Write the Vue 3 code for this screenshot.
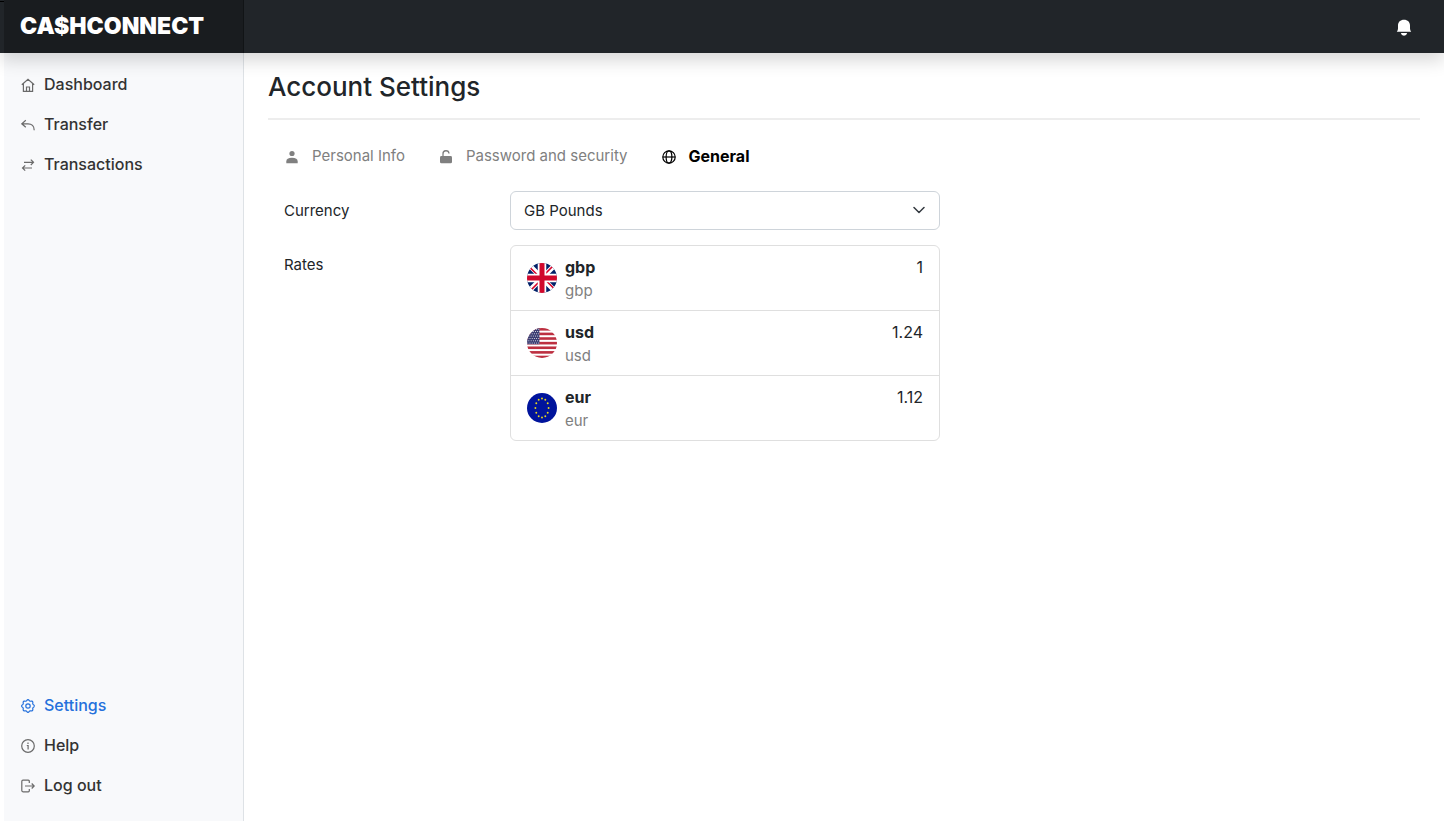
<script setup>
import { ref } from 'vue'

const mainLinks = [
  { label: 'Dashboard', icon: 'home' },
  { label: 'Transfer', icon: 'reply' },
  { label: 'Transactions', icon: 'swap' },
]
const footLinks = [
  { label: 'Settings', icon: 'gear', active: true },
  { label: 'Help', icon: 'info' },
  { label: 'Log out', icon: 'exit' },
]
const tabs = [
  { label: 'Personal Info', icon: 'person' },
  { label: 'Password and security', icon: 'lock' },
  { label: 'General', icon: 'globe', active: true },
]
const strokes = {
  home: 'M.8 6.700 7 1.200l6.200 5.500M2.400 5.600V13.300H11.600V5.600M5.500 13V9H8.500V13',
  reply: 'M4.800 2.300.8 5.800 4.800 9.300M1 5.800H7C10.800 5.800 13.200 8 13.200 12.300',
  swap: 'M3 4.300H12.500M9.800 1.600 12.500 4.300 9.800 7M11 10H1.500M4.200 7.300 1.500 10 4.200 12.700',
  info: 'M7 .7A6.300 6.300 0 1 1 7 13.300A6.300 6.300 0 1 1 7 .7M5.800 6.500H7.100V10.500M7 3.500V4.900',
  exit: 'M8.300 4V2.200Q8.300 1.200 7.300 1.200H2Q.8 1.200 .8 2.400V11.600Q.8 12.800 2 12.800H7.300Q8.300 12.800 8.300 11.800V10M4 7H13.200M10.700 4.500 13.200 7 10.700 9.500',
}
const gear = Array.from({ length: 65 }, (_, i) => {
  const a = (i / 64) * Math.PI * 2
  const r = 5.8 + 0.6 * Math.cos(a * 8)
  return `${(7 + r * Math.cos(a)).toFixed(2)},${(7 + r * Math.sin(a)).toFixed(2)}`
}).join(' ')

const currency = ref('gbp')
const rates = [
  { code: 'gbp', value: '1' },
  { code: 'usd', value: '1.24' },
  { code: 'eur', value: '1.12' },
]
const stars = Array.from({ length: 12 }, (_, i) => {
  const a = (i / 12) * Math.PI * 2
  return { x: 15 + 6.6 * Math.sin(a), y: 15 - 9.5 * Math.cos(a) }
})
const canton = Array.from({ length: 42 }, (_, i) => ({
  x: 0.8 + (i % 6) * 2.2 + (Math.floor(i / 6) % 2) * 1.1,
  y: 1.2 + Math.floor(i / 6) * 2.3,
}))
</script>

<template>
  <div class="page">
    <header class="topbar">
      <a class="brand" href="#">CA$HCONNECT</a>
      <button class="bell" type="button" aria-label="Notifications">
        <svg width="16" height="18" viewBox="0 0 16 18" fill="#fff">
          <path d="M8 .8C4.300.8 2 3.200 2 6.500V9.500Q2 11.300.8 12.700H15.200Q14 11.300 14 9.500V6.500C14 3.200 11.700.8 8 .8ZM4.800 14H11.200Q10.600 16.700 8 16.700T4.800 14Z" />
        </svg>
      </button>
    </header>
    <div class="body">
      <nav class="sidebar" aria-label="Main">
        <ul v-for="(group, g) in [mainLinks, footLinks]" :key="g">
          <li v-for="l in group" :key="l.label">
            <a href="#" :class="{ active: l.active }">
              <svg class="ico" width="14" height="14" viewBox="0 0 14 14">
                <template v-if="l.icon === 'gear'">
                  <polyline :points="gear" />
                  <circle cx="7" cy="7" r="2.200" />
                </template>
                <path v-else :d="strokes[l.icon]" />
              </svg>
              {{ l.label }}
            </a>
          </li>
        </ul>
      </nav>
      <main>
        <h1>Account Settings</h1>
        <nav class="tabs" aria-label="Settings sections">
          <a v-for="t in tabs" :key="t.label" href="#" :class="{ active: t.active }">
            <svg width="16" height="16" viewBox="0 0 16 16" fill="currentColor">
              <g v-if="t.icon === 'person'">
                <circle cx="8" cy="4.500" r="2.600" />
                <path d="M2.300 14.300V12.500Q2.300 8.800 8 8.800T13.700 12.500V14.300Z" />
              </g>
              <g v-else-if="t.icon === 'lock'">
                <rect x="2" y="7" width="12" height="7.300" rx="1.400" />
                <path d="M5 7.500V5A3 3 0 0 1 11 4.500" fill="none" stroke="currentColor" stroke-width="1.300" />
              </g>
              <g v-else fill="none" stroke="currentColor" stroke-width="1.200">
                <circle cx="8" cy="8" r="6.200" />
                <ellipse cx="8" cy="8" rx="2.900" ry="6.200" />
                <path d="M1.800 8H14.200" />
              </g>
            </svg>
            {{ t.label }}
          </a>
        </nav>
        <form class="form">
          <label for="currency">Currency</label>
          <div class="select">
            <select id="currency" v-model="currency">
              <option value="gbp">GB Pounds</option>
              <option value="usd">US Dollars</option>
              <option value="eur">Euros</option>
            </select>
            <svg width="12" height="12" viewBox="0 0 12 12"><path d="M1 3.500 6 8.500 11 3.500" /></svg>
          </div>
          <span id="rates">Rates</span>
          <ul class="rates" aria-labelledby="rates">
            <li v-for="r in rates" :key="r.code">
              <svg class="flag" width="30" height="30" viewBox="0 0 30 30">
                <g v-if="r.code === 'gbp'">
                  <rect width="30" height="30" fill="#012169" />
                  <path d="M0 0 30 30M30 0 0 30" stroke="#fff" stroke-width="5" />
                  <path d="M1 2.500 15 16.500M28 1 14 15M2 29 16 15M29 27.500 15 13.500" stroke="#d80027" stroke-width="1.600" />
                  <path d="M15 0V30M0 15H30" stroke="#fff" stroke-width="8.500" />
                  <path d="M15 0V30M0 15H30" stroke="#d0082c" stroke-width="5" />
                </g>
                <g v-else-if="r.code === 'usd'">
                  <rect width="30" height="30" fill="#fff" />
                  <rect v-for="n in 7" :key="n" y="0" width="30" height="2.600" fill="#bd2f40" :transform="`translate(0 ${(n - 1) * 4.615})`" />
                  <rect width="12.500" height="16.200" fill="#3a3c72" />
                  <circle v-for="(c, i) in canton" :key="'c' + i" :cx="c.x" :cy="c.y" r=".5" fill="#fff" />
                </g>
                <g v-else>
                  <rect width="30" height="30" fill="#00149c" />
                  <circle v-for="(s, i) in stars" :key="i" :cx="s.x" :cy="s.y" r=".95" fill="#e8d81c" />
                </g>
              </svg>
              <div class="name">
                <strong>{{ r.code }}</strong>
                <span>{{ r.code }}</span>
              </div>
              <span class="value">{{ r.value }}</span>
            </li>
          </ul>
        </form>
      </main>
    </div>
  </div>
</template>

<style>
body {
  margin: 0;
  background: #fff;
}
</style>

<style scoped>
.page {
  min-height: 100vh;
  display: flex;
  flex-direction: column;
  font: 400 15px/24px Inter, "Liberation Sans", sans-serif;
  color: #212529;
}
* {
  box-sizing: border-box;
}
a {
  color: inherit;
  text-decoration: none;
}
ul {
  list-style: none;
  margin: 0;
  padding: 0;
}
.topbar {
  position: relative;
  z-index: 1;
  display: flex;
  justify-content: space-between;
  align-items: center;
  height: 53px;
  padding-left: 4px;
  background: #212529;
  box-shadow: 0 8px 16px rgba(0, 0, 0, 0.15);
}
.topbar::before {
  content: "";
  position: absolute;
  left: 0;
  top: 1px;
  width: 4px;
  height: 1px;
  background: #000;
}
.brand {
  width: 240px;
  height: 53px;
  padding-left: 16px;
  background: #191c1f;
  border-right: 1px solid #111416;
  color: #fff;
  font-size: 23px;
  font-weight: 900;
  line-height: 52px;
}
.bell {
  display: flex;
  margin-right: 32px;
  padding: 2px 0 0;
  border: 0;
  background: none;
}
.body {
  flex: 1;
  display: flex;
  padding-left: 4px;
}
.sidebar {
  width: 240px;
  display: flex;
  flex-direction: column;
  justify-content: space-between;
  padding: 11px 0 16px;
  background: #f8f9fb;
  border-right: 1px solid #dee2e6;
  font-size: 16px;
  font-weight: 500;
  color: #333;
}
.sidebar a {
  display: flex;
  align-items: center;
  gap: 9px;
  height: 40px;
  padding-left: 17px;
}
.sidebar a.active {
  color: #2470dc;
}
.ico {
  margin-top: 2px;
  fill: none;
  stroke: #6a6a6a;
  stroke-width: 1.2;
}
.active .ico {
  stroke: #2470dc;
}
main {
  flex: 1;
  padding: 16px 24px;
}
h1 {
  margin: 0 0 16px;
  padding-bottom: 13px;
  border-bottom: 2px solid #ededed;
  font-size: 26px;
  font-weight: 500;
  line-height: 36px;
}
.tabs {
  display: flex;
  gap: 1px;
  color: #808080;
}
.tabs a {
  display: flex;
  align-items: center;
  gap: 12px;
  height: 40px;
  padding: 0 16px;
}
.tabs svg {
  margin-top: 2px;
}
.tabs .active {
  color: #000;
  font-size: 16px;
  font-weight: 700;
}
.form {
  display: grid;
  grid-template-columns: 226px 1fr;
  row-gap: 15px;
  width: 58.3333%;
  margin-top: 15px;
  padding-left: 16px;
}
.form > label,
.form > span {
  padding-top: 8px;
}
.select {
  position: relative;
}
select {
  display: block;
  width: 100%;
  height: 39px;
  padding: 0 13px;
  border: 1px solid #ced4da;
  border-radius: 6px;
  background: #fff;
  color: inherit;
  font: inherit;
  appearance: none;
}
.select svg {
  position: absolute;
  right: 15px;
  top: 13px;
  fill: none;
  stroke: #343a40;
  stroke-width: 1.5;
  stroke-linecap: round;
  stroke-linejoin: round;
  pointer-events: none;
}
.rates {
  border: 1px solid #dfdfdf;
  border-radius: 6px;
}
.rates li {
  display: flex;
  align-items: flex-start;
  gap: 8px;
  padding: 9px 16px 7px;
}
.rates li + li {
  border-top: 1px solid #dfdfdf;
}
.flag {
  margin-top: 8px;
  border-radius: 50%;
}
.name {
  flex: 1;
  display: flex;
  flex-direction: column;
}
.name strong,
.value {
  font-size: 16px;
}
.name span {
  color: #808080;
}
</style>
